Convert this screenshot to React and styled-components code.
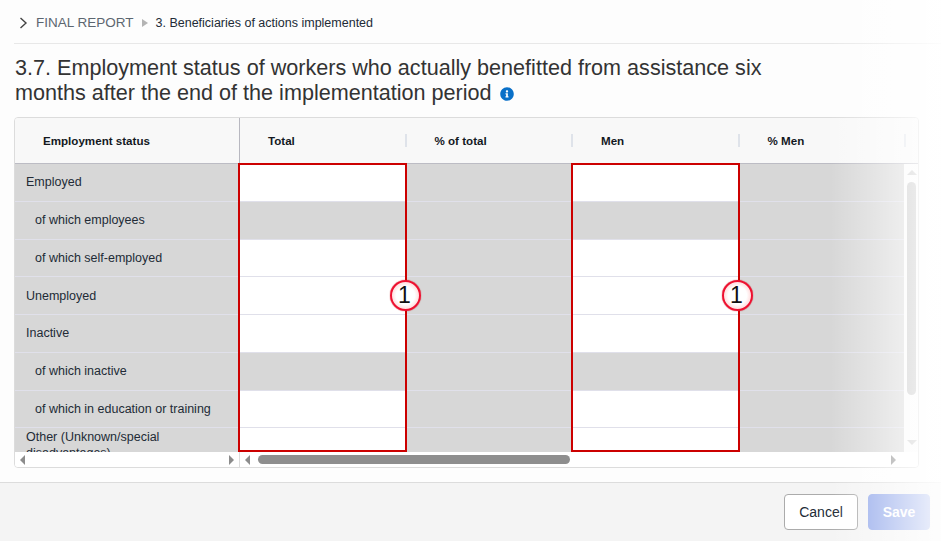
import React from 'react';
import styled, { createGlobalStyle } from 'styled-components';
import { FaInfoCircle } from 'react-icons/fa';

const Global = createGlobalStyle`
  html, body { margin: 0; padding: 0; background: #fdfdfd; }
  body { font-family: "Liberation Sans", Arial, sans-serif; color: #222b36; }
`;
const Page = styled.div`
  position: relative; width: 941px; height: 541px; overflow: hidden;
  display: flex; flex-direction: column; background: #fdfdfd;
`;
const Main = styled.div`
  height: 482px; box-sizing: border-box; padding: 0 0 0 14px; display: flex; flex-direction: column;
`;
const Breadcrumb = styled.div`
  height: 44px; box-sizing: border-box; border-bottom: 1px solid #e8e8e8;
  display: flex; align-items: center; font-size: 12.5px; padding: 2px 0 0 5px;
`;
const Chevron = styled.svg` width: 9px; height: 12px; margin-right: 8px; `;
const Root = styled.span` color: #5c6670; font-size: 13.5px; `;
const Arrow = styled.span`
  width: 0; height: 0; border-left: 6px solid #b4b4b4; border-top: 4.5px solid transparent;
  border-bottom: 4.5px solid transparent; margin: 0 8px 0 8px;
`;
const Title = styled.h1`
  margin: 11px 0 0 1px; width: 780px; font-size: 21.6px; font-weight: 400; line-height: 25px; color: #333;
`;
const Info = styled(FaInfoCircle)`
  color: #0a70c8; font-size: 14px; margin-left: 8px; vertical-align: -1px;
`;
const TableBox = styled.div`
  position: relative; margin-top: 12px; width: 905px; height: 351px; box-sizing: border-box;
  border: 1px solid #dcdcdc; border-radius: 4px; display: grid;
  grid-template-columns: 225px 1fr 14px; grid-template-rows: 46px 288px 15px; overflow: hidden;
`;
const FrozenHead = styled.div`
  background: #f8f8f8; border-bottom: 1px solid #bcbcc4; border-right: 1px solid #b8b8c0;
  display: flex; align-items: center; font-size: 11.6px; font-weight: 700; padding-left: 28px; color: #14181f;
`;
const HeadRow = styled.div`
  background: #f8f8f8; border-bottom: 1px solid #bcbcc4; display: grid;
  grid-template-columns: repeat(4, 166.5px); align-items: center; grid-column: 2 / 4;
`;
const HeadCell = styled.div`
  height: 13px; line-height: 13px; font-size: 11.6px; font-weight: 700; color: #14181f; padding-left: 28px;
  border-right: 2px solid #dfe3ea;
`;
const FrozenBody = styled.div`
  background: #d7d7d7; overflow: hidden; border-right: 1px solid #dfe0ea;
`;
const RowLabel = styled.div`
  height: 37.75px; box-sizing: border-box; border-bottom: 1px solid #e0e0ea; display: flex; align-items: center;
  font-size: 12.5px; line-height: 16px; padding: 0 5px 0 ${p => (p.$indent ? 20 : 11)}px; color: #222b36;
  ${p => p.$wrap && 'align-items: flex-start; padding-right: 40px; padding-top: 1px; height: 48px;'}
`;
const DataBody = styled.div` overflow: hidden; `;
const DataRow = styled.div`
  height: 37.75px; box-sizing: border-box; display: grid; grid-template-columns: repeat(4, 166.5px);
`;
const Cell = styled.div`
  box-sizing: border-box; border-bottom: 1px solid #e0e0ea; background: ${p => (p.$white ? '#fff' : '#d7d7d7')};
`;
const VScroll = styled.div`
  background: #fbfbfb; display: flex; flex-direction: column; align-items: center; padding: 6px 0 0 1px; box-sizing: border-box;
`;
const VUp = styled.span`
  width: 0; height: 0; border-bottom: 5px solid #c4c4c4; border-left: 5px solid transparent; border-right: 5px solid transparent;
`;
const VDown = styled(VUp)` border-bottom: 0; border-top: 5px solid #c4c4c4; margin-top: 45px; `;
const VThumb = styled.div` width: 9px; height: 213px; margin-top: 7px; border-radius: 5px; background: #c0c0c0; `;
const HLeft = styled.div`
  background: #fff; border-right: 1px solid #dcdcdc; display: flex; align-items: center; justify-content: space-between; padding: 0 5px;
`;
const HRight = styled.div`
  grid-column: 2 / 4; background: #fff; display: flex; align-items: center; padding: 0 22px 0 5px;
`;
const ArrowL = styled.span`
  width: 0; height: 0; border-right: 5px solid #8c8c8c; border-top: 5px solid transparent; border-bottom: 5px solid transparent;
`;
const ArrowR = styled.span`
  width: 0; height: 0; border-left: 5px solid #8c8c8c; border-top: 5px solid transparent; border-bottom: 5px solid transparent;
`;
const HTrack = styled.div` flex: 1; padding: 0 0 0 8px; `;
const HThumb = styled.div` width: 312px; height: 9px; border-radius: 5px; background: #8e8e8e; `;
const Highlight = styled.div`
  position: absolute; top: 45px; left: ${p => p.$left}px; width: 169px; height: 289px; box-sizing: border-box;
  border: 2px solid #cc0000; pointer-events: none;
`;
const Badge = styled.div`
  position: absolute; left: ${p => p.$left}px; top: 280px; width: 31px; height: 31px; box-sizing: border-box;
  border-radius: 50%; border: 2px solid #ee1030;
  background: radial-gradient(circle at 50% 50%, #fff 48%, #ffdcdc 72%, #ee8f8f 100%);
  box-shadow: 0 0 1px #b00;
  display: flex; align-items: center; justify-content: center;
  font-size: 23px; line-height: 1; color: #111; padding-right: 2px;
`;
const Footer = styled.div`
  height: 59px; box-sizing: border-box; border-top: 1px solid #dcdcdc; background: #f4f4f4;
  display: flex; justify-content: flex-end; align-items: flex-start; padding: 11px 11px 0 0; gap: 10px;
`;
const Button = styled.button`
  width: ${p => p.$w}px; height: 36px; box-sizing: border-box; border-radius: 4px; font: 14px "Liberation Sans", Arial, sans-serif;
  background: ${p => (p.$primary ? '#90a6ea' : '#fff')}; color: ${p => (p.$primary ? '#fff' : '#222b36')};
  border: 1px solid ${p => (p.$primary ? '#90a6ea' : '#ababab')}; font-weight: ${p => (p.$primary ? 700 : 400)};
`;
const Fade = styled.div`
  position: absolute; top: 0; right: 0; bottom: 0; width: 111px; pointer-events: none;
  background: linear-gradient(to right, rgba(255,255,255,0), rgba(255,255,255,0.87));
`;

const rows = [
  ['Employed', false, true],
  ['of which employees', true, false],
  ['of which self-employed', true, true],
  ['Unemployed', false, true],
  ['Inactive', false, true],
  ['of which inactive', true, false],
  ['of which in education or training', true, true],
  ['Other (Unknown/special disadvantages)', false, true],
];
const heads = ['Total', '% of total', 'Men', '% Men'];

export default function App() {
  return (
    <Page>
      <Global />
      <Main>
        <Breadcrumb>
          <Chevron viewBox="0 0 9 12"><path d="M1.5 1 L7 6 L1.5 11" fill="none" stroke="#444" strokeWidth="1.4" /></Chevron>
          <Root>FINAL REPORT</Root>
          <Arrow />
          <span>3. Beneficiaries of actions implemented</span>
        </Breadcrumb>
        <Title>
          3.7. Employment status of workers who actually benefitted from assistance six months after the end of the implementation period
          <Info />
        </Title>
        <TableBox>
          <FrozenHead>Employment status</FrozenHead>
          <HeadRow>{heads.map(h => <HeadCell key={h}>{h}</HeadCell>)}</HeadRow>
          <FrozenBody>
            {rows.map((r, i) => <RowLabel key={r[0]} $indent={r[1]} $wrap={i === 7}>{r[0]}</RowLabel>)}
          </FrozenBody>
          <DataBody>
            {rows.map(r => (
              <DataRow key={r[0]}>
                <Cell $white={r[2]} /><Cell /><Cell $white={r[2]} /><Cell />
              </DataRow>
            ))}
          </DataBody>
          <VScroll><VUp /><VThumb /><VDown /></VScroll>
          <HLeft><ArrowL /><ArrowR /></HLeft>
          <HRight><ArrowL /><HTrack><HThumb /></HTrack><ArrowR /></HRight>
          <Highlight $left={223} />
          <Highlight $left={556} />
        </TableBox>
      </Main>
      <Footer>
        <Button $w={74}>Cancel</Button>
        <Button $w={62} $primary>Save</Button>
      </Footer>
      <Badge $left={390}>1</Badge>
      <Badge $left={722}>1</Badge>
      <Fade />
    </Page>
  );
}
